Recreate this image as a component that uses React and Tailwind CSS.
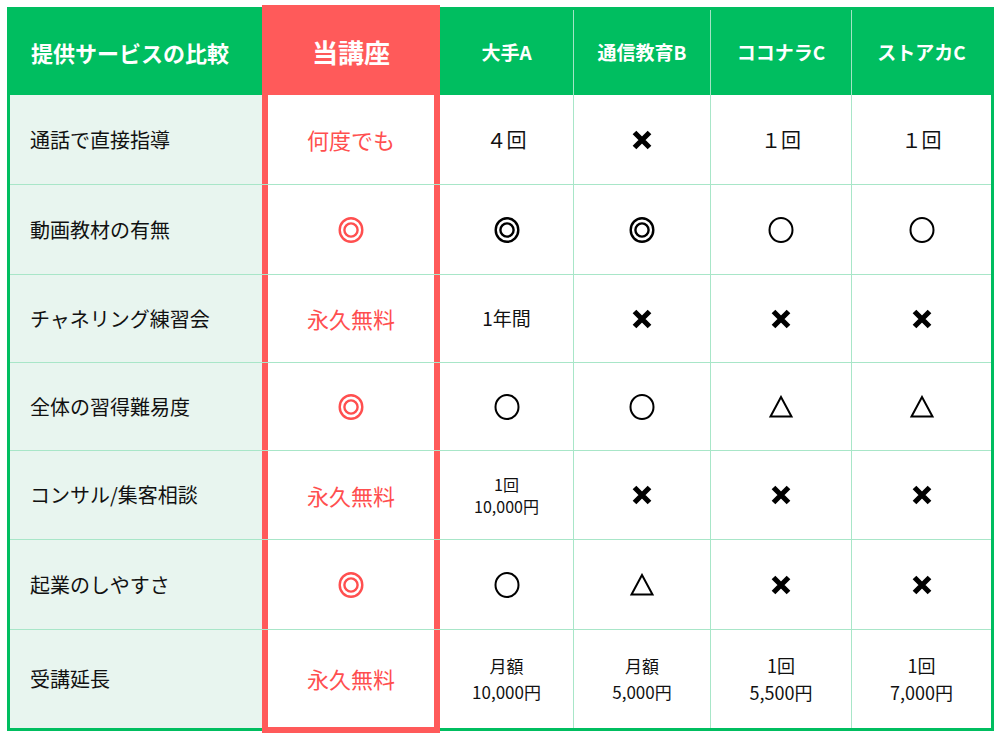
import React from 'react';

// symbols drawn as svg so stroke weights match
function Circle({ red }) {
  return (
    <svg width="26" height="26" viewBox="0 0 26 26" className={red ? 'text-[#ff4f4f]' : 'text-black'}>
      <ellipse cx="13" cy="13" rx="11.5" ry="12" fill="none" stroke="currentColor" strokeWidth="2" />
    </svg>
  );
}

function Double({ red }) {
  return (
    <svg width="26" height="26" viewBox="0 0 26 26" className={red ? 'text-[#ff4f4f]' : 'text-black'}>
      <ellipse cx="13" cy="13" rx="11.3" ry="11.8" fill="none" stroke="currentColor" strokeWidth="2.4" />
      <circle cx="13" cy="13" r="6.6" fill="none" stroke="currentColor" strokeWidth="2.4" />
    </svg>
  );
}

function Tri() {
  return (
    <svg width="26" height="24" viewBox="0 0 26 24" className="text-black">
      <path d="M13 2 L2.5 21.5 L23.5 21.5 Z" fill="none" stroke="currentColor" strokeWidth="2" strokeLinejoin="miter" />
    </svg>
  );
}

function Cross() {
  return (
    <svg width="22" height="22" viewBox="0 0 22 22" className="text-black">
      <path d="M3.5 3.5 L18.5 18.5 M18.5 3.5 L3.5 18.5" stroke="currentColor" strokeWidth="5.2" strokeLinecap="butt" />
    </svg>
  );
}

function Mark({ v }) {
  if (v === 'x') return <Cross />;
  if (v === 'o') return <Circle />;
  if (v === 'oo') return <Double />;
  if (v === 'tri') return <Tri />;
  return v;
}

const rows = [
  {
    label: '通話で直接指導',
    h: 'h-[90px]',
    ours: <span className="text-[22px]">何度でも</span>,
    others: [<span className="text-[20px]">４回</span>, 'x', <span className="text-[20px]">１回</span>, <span className="text-[20px]">１回</span>],
  },
  {
    label: '動画教材の有無',
    h: 'h-[90px]',
    ours: <Double red />,
    others: ['oo', 'oo', 'o', 'o'],
  },
  {
    label: 'チャネリング練習会',
    h: 'h-[88px]',
    ours: <span className="text-[22px]">永久無料</span>,
    others: [<span className="text-[19px]">1年間</span>, 'x', 'x', 'x'],
  },
  {
    label: '全体の習得難易度',
    h: 'h-[88px]',
    ours: <Double red />,
    others: ['o', 'o', 'tri', 'tri'],
  },
  {
    label: 'コンサル/集客相談',
    h: 'h-[89px]',
    ours: <span className="text-[22px]">永久無料</span>,
    others: [
      <span className="text-[16px] leading-[22px]">1回<br />10,000円</span>,
      'x', 'x', 'x',
    ],
  },
  {
    label: '起業のしやすさ',
    h: 'h-[90px]',
    ours: <Double red />,
    others: ['o', 'tri', 'x', 'x'],
  },
  {
    label: '受講延長',
    h: 'h-[98px]',
    ours: <span className="text-[22px]">永久無料</span>,
    others: [
      <span className="text-[17px] leading-[26px]">月額<br />10,000円</span>,
      <span className="text-[17px] leading-[26px]">月額<br />5,000円</span>,
      <span className="text-[18px] leading-[27px]">1回<br />5,500円</span>,
      <span className="text-[18px] leading-[27px]">1回<br />7,000円</span>,
    ],
  },
];

const widths = ['w-[133px]', 'w-[137px]', 'w-[141px]', 'w-[140px]'];

export default function App() {
  return (
    <div className="min-h-screen bg-white pt-[7px] pl-[7px] font-['Noto_Sans_CJK_JP','Noto_Sans',sans-serif] text-[#111]">
      <div className="w-[987px] border-[3px] border-[#00be60]">
        {/* header */}
        <div className="flex h-[85px] bg-[#00be60] text-white font-bold">
          <div className="w-[252px] flex items-center pl-[21px] text-[22px]">提供サービスの比較</div>
          <div className="w-[178px] h-[90px] -mt-[5px] bg-[#ff5a5a] flex items-center justify-center pt-[3px] text-[26px]">当講座</div>
          {['大手A', '通信教育B', 'ココナラC', 'ストアカC'].map((t, i) => (
            <div
              key={t}
              className={`${widths[i]} flex items-center justify-center text-[19px] ${i > 0 ? 'border-l border-[#a3e4c5]' : ''}`}
            >
              {t}
            </div>
          ))}
        </div>

        {rows.map((r, ri) => {
          const last = ri === rows.length - 1;
          return (
            <div key={r.label} className={`flex ${r.h} ${last ? '' : 'border-b border-[#a8e6c8]'}`}>
              <div className="w-[252px] bg-[#e8f5ef] flex items-center pl-[20px] text-[20px]">{r.label}</div>
              <div
                className={`w-[178px] shrink-0 bg-white border-x-[6px] border-[#ff5a5a] flex items-center justify-center text-[#ff4f4f] ${
                  last ? 'h-[103px] border-b-[6px] -mb-[5px] self-start' : ''
                }`}
              >
                {r.ours}
              </div>
              {r.others.map((v, i) => (
                <div
                  key={i}
                  className={`${widths[i]} flex items-center justify-center text-center ${i > 0 ? 'border-l border-[#a8e6c8]' : ''}`}
                >
                  <Mark v={v} />
                </div>
              ))}
            </div>
          );
        })}
      </div>
    </div>
  );
}
